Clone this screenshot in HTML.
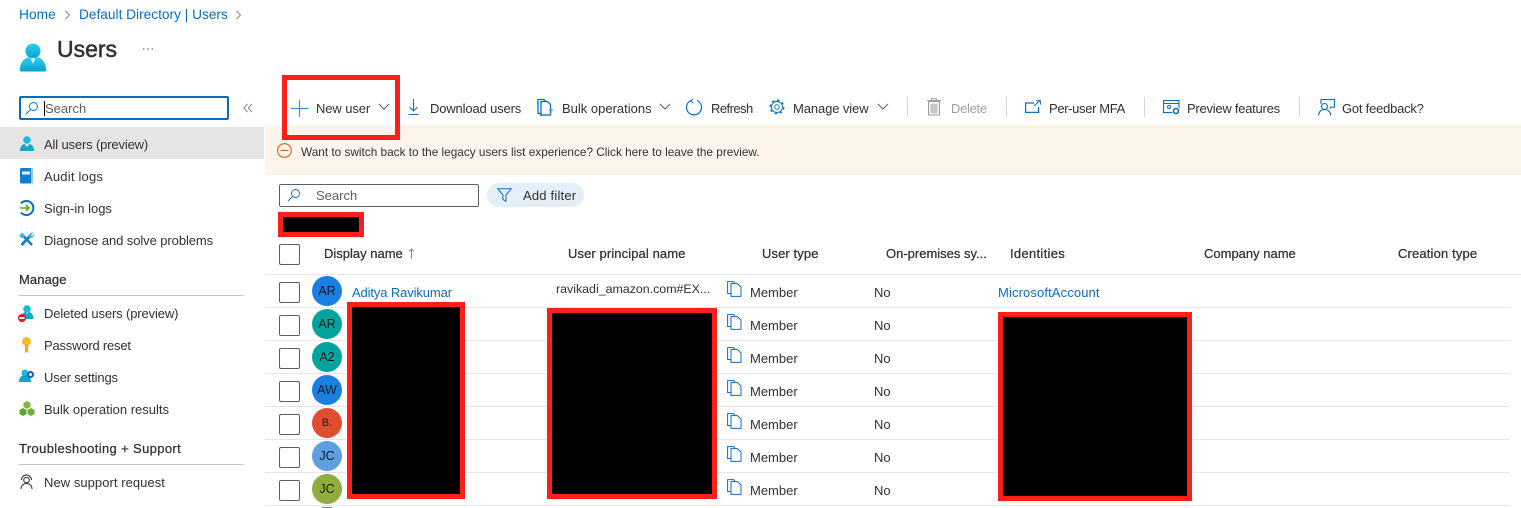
<!DOCTYPE html>
<html><head><meta charset="utf-8"><style>
html,body{margin:0;padding:0;background:#fff}
#p{position:relative;width:1521px;height:508px;overflow:hidden;background:#fff;font-family:"Liberation Sans",sans-serif;font-size:13px;color:#323130}
#p div,#p svg,#p span.t{position:absolute}
.t{white-space:nowrap;line-height:16px}
.b{color:#0f6cbd}
.h{font-weight:400;-webkit-text-stroke:.25px #323130}
.cb{width:19px;height:19px;border:1px solid #605e5c;border-radius:2px;left:279px;background:#fff}
.av{width:30px;height:30px;border-radius:50%;left:312px;text-align:center;line-height:30px;font-size:12.5px;color:#1b1a19}
.ln{height:1px;background:#e6e6e6;left:265px}
.rd{box-sizing:border-box;background:#000;border:5px solid #fe1f1b}
.sep{width:1px;height:20px;background:#d6d6d6;top:97px}
</style></head><body><div id="p">

<span class="t b" style="left:19px;top:7px;font-size:13.8px">Home</span>
<svg style="left:64px;top:10px" width="8" height="10" viewBox="0 0 8 10"><path d="M1.5 1l4 4-4 4" fill="none" stroke="#8a8886"/></svg>
<span class="t b" style="left:79px;top:7px;font-size:13.7px">Default Directory | Users</span>
<svg style="left:235px;top:10px" width="8" height="10" viewBox="0 0 8 10"><path d="M1.5 1l4 4-4 4" fill="none" stroke="#8a8886"/></svg>

<svg style="left:19px;top:42px" width="28" height="30" viewBox="0 0 28 30"><defs><linearGradient id="g" x1="0" y1="0" x2="0" y2="1"><stop offset="0" stop-color="#2bd0f2"/><stop offset="1" stop-color="#0aa0cf"/></linearGradient></defs><circle cx="14" cy="9" r="7.500" fill="url(#g)"/><path d="M1 28c0-7 3-11 8-12.500h10c5 1.500 8 5.500 8 12.500 0 1-.5 1.500-1.500 1.500h-23C1.500 29.500 1 29 1 28z" fill="url(#g)"/><path d="M11.500 16h5L14 22z" fill="#d7f3fb"/></svg>
<span class="t" style="left:57px;top:35px;font-size:23px;line-height:28px;font-weight:400;-webkit-text-stroke:.5px #323130">Users</span>
<span class="t" style="left:142px;top:41px;font-size:11px;letter-spacing:.5px">···</span>

<div style="left:19px;top:96px;width:206px;height:20px;border:2px solid #0f6cbd;border-radius:2px;background:#fff"></div>
<svg style="left:25px;top:101px" width="14" height="14" viewBox="0 0 14 14"><circle cx="8.500" cy="5.500" r="4" fill="none" stroke="#0f6cbd" stroke-width=".9"/><path d="M5.500 8.500L1 13" stroke="#0f6cbd" fill="none"/></svg>
<div style="left:44px;top:101px;width:1px;height:15px;background:#000"></div>
<span class="t" style="left:45px;top:101px;color:#605e5c">Search</span>
<svg style="left:243px;top:103px" width="10" height="10" viewBox="0 0 10 10"><path d="M4.500 1L.8 5l3.700 4M9 1L5.300 5 9 9" fill="none" stroke="#8a8886"/></svg>

<div style="left:0;top:127px;width:264px;height:32px;background:#e7e5e3"></div>
<svg style="left:20px;top:136px" width="14" height="16" viewBox="0 0 14 16"><circle cx="7" cy="4" r="3.800" fill="#1cb8dd"/><path d="M0 15c0-4 2-6.500 4.500-7L7 11l2.500-3C12 8.500 14 11 14 15z" fill="#0ea5cf"/></svg>
<span class="t" style="left:44px;top:137px;letter-spacing:-.15px">All users (preview)</span>
<svg style="left:20px;top:168px" width="13" height="16" viewBox="0 0 13 16"><rect width="13" height="15.500" rx="1.500" fill="#0f7fd0"/><rect x="11" width="2" height="15.500" fill="#8ecae9"/><rect x="2" y="3.500" width="8" height="3" fill="#dff1fb"/></svg>
<span class="t" style="left:44px;top:169px;letter-spacing:.2px">Audit logs</span>
<svg style="left:19px;top:200px" width="16" height="16" viewBox="0 0 16 16"><path d="M2 3.500A7 7 0 1 1 2 12.500" fill="none" stroke="#0f6cbd" stroke-width="2"/><path d="M1 8h9M7 5l3 3-3 3" fill="none" stroke="#5db300" stroke-width="1.600"/></svg>
<span class="t" style="left:44px;top:201px">Sign-in logs</span>
<svg style="left:19px;top:232px" width="15" height="15" viewBox="0 0 15 15"><path d="M2.500 13L11.500 3.500" stroke="#0f7fd0" stroke-width="2.800"/><path d="M3.500 3L13 13" stroke="#0f7fd0" stroke-width="2.500"/><path d="M0 3.500L3 .5l3 3-3 3z" fill="#35b8e6"/><path d="M10 4c0-2 2-4 4.500-3.500L12 3l1 1 2-2c.3 2.500-2 4.500-4 4z" fill="#35b8e6"/></svg>
<span class="t" style="left:44px;top:233px;letter-spacing:-.08px">Diagnose and solve problems</span>

<span class="t h" style="left:19px;top:272px;letter-spacing:.1px">Manage</span>
<div style="left:19px;top:295px;width:225px;height:1px;background:#c4c4c4"></div>
<svg style="left:18px;top:305px" width="16" height="17" viewBox="0 0 16 17"><circle cx="9" cy="4" r="3.800" fill="#1cb8dd"/><path d="M3 14c0-4 2-6.500 4.500-7L9 9l2-2c2.500.5 4.500 3 4.500 7z" fill="#0ea5cf"/><circle cx="4" cy="13" r="4" fill="#e81123"/><rect x="1.500" y="12" width="5" height="2" fill="#fff"/></svg>
<span class="t" style="left:44px;top:306px;letter-spacing:-.13px">Deleted users (preview)</span>
<svg style="left:21px;top:337px" width="11" height="16" viewBox="0 0 11 16"><circle cx="5.500" cy="4.500" r="4.500" fill="#fcb92c"/><rect x="4" y="7" width="3.200" height="8.500" fill="#f7a81b"/></svg>
<span class="t" style="left:44px;top:338px;letter-spacing:-.2px">Password reset</span>
<svg style="left:19px;top:369px" width="16" height="14" viewBox="0 0 16 14"><circle cx="6" cy="4" r="3.500" fill="#1cb8dd"/><path d="M0 13c0-4 2-6 4-6.500h4c2 .5 4 2.500 4 6.500z" fill="#0ea5cf"/><circle cx="11.500" cy="5.500" r="2.500" fill="#fff" stroke="#0f5fc0" stroke-width="2"/></svg>
<span class="t" style="left:44px;top:370px;letter-spacing:-.15px">User settings</span>
<svg style="left:19px;top:401px" width="16" height="15" viewBox="0 0 16 15"><path d="M8 0l3.500 2v4L8 8 4.500 6V2z" fill="#7fba3d"/><path d="M4 7l3.500 2v4L4 15 .5 13V9z" fill="#5fa52d"/><path d="M12 7l3.500 2v4L12 15l-3.500-2V9z" fill="#6fb135"/></svg>
<span class="t" style="left:44px;top:402px">Bulk operation results</span>

<span class="t h" style="left:19px;top:441px;letter-spacing:.36px">Troubleshooting + Support</span>
<div style="left:19px;top:464px;width:225px;height:1px;background:#c4c4c4"></div>
<svg style="left:19px;top:474px" width="15" height="16" viewBox="0 0 15 16"><circle cx="7.500" cy="6" r="2.800" fill="none" stroke="#323130"/><path d="M2.500 6a5 5 0 0 1 10 0M2 15c0-3 2-5.500 5.500-5.500S13 12 13 15" fill="none" stroke="#323130"/></svg>
<span class="t" style="left:44px;top:475px;letter-spacing:.05px">New support request</span>

<!-- Toolbar -->
<svg style="left:291px;top:100px" width="17" height="17" viewBox="0 0 17 17"><path d="M8.500 0v17M0 8.500h17" stroke="#3d8fd8" stroke-width="1.200"/></svg>
<span class="t" style="left:316px;top:101px;letter-spacing:-.1px">New user</span>
<svg style="left:378px;top:103px" width="12" height="8" viewBox="0 0 12 8"><path d="M1 1l5 5 5-5" fill="none" stroke="#605e5c"/></svg>
<svg style="left:408px;top:99px" width="11" height="17" viewBox="0 0 11 17"><path d="M5.500 0v12M1.500 8l4 4 4-4" fill="none" stroke="#0f6cbd"/><path d="M.5 15.500h10" stroke="#0f6cbd"/></svg>
<span class="t" style="left:430px;top:101px;letter-spacing:-.15px">Download users</span>
<svg style="left:537px;top:98px" width="17" height="18" viewBox="0 0 17 18"><path d="M1 1.500h6l3 3V17H3.500V15.500H1z" fill="none" stroke="#0f6cbd" stroke-width="1.300"/><path d="M4 3.500h6.500l3 3V17H4z" fill="#fff" stroke="#0f6cbd" stroke-width="1.300"/><path d="M14 10v5M12 12h4" stroke="#3d8fd8"/></svg>
<span class="t" style="left:562px;top:101px">Bulk operations</span>
<svg style="left:659px;top:103px" width="12" height="8" viewBox="0 0 12 8"><path d="M1 1l5 5 5-5" fill="none" stroke="#605e5c"/></svg>
<svg style="left:686px;top:98px" width="17" height="18" viewBox="0 0 17 18"><path d="M5 2.500A7.500 7.500 0 1 0 11 2.500" fill="none" stroke="#0f6cbd" stroke-width="1.200"/><path d="M7 1L4.500 3 7.500 5" fill="none" stroke="#0f6cbd" stroke-width="1"/></svg>
<span class="t" style="left:711px;top:101px;letter-spacing:-.55px">Refresh</span>
<svg style="left:769px;top:99px" width="16" height="16" viewBox="0 0 16 16"><circle cx="8" cy="8" r="2.300" fill="none" stroke="#0f6cbd" stroke-width=".9"/><circle cx="8" cy="8" r="5.500" fill="none" stroke="#0f6cbd" stroke-width=".9"/><circle cx="8" cy="8" r="6.800" fill="none" stroke="#0f6cbd" stroke-width="1.300" stroke-dasharray="2.600 2.700"/></svg>
<span class="t" style="left:793px;top:101px;letter-spacing:-.1px">Manage view</span>
<svg style="left:877px;top:103px" width="12" height="8" viewBox="0 0 12 8"><path d="M1 1l5 5 5-5" fill="none" stroke="#605e5c"/></svg>
<div class="sep" style="left:907px"></div>
<svg style="left:927px;top:98px" width="14" height="18" viewBox="0 0 14 18"><path d="M0 2.500h14M4.500 2.500V.7h5v1.800" fill="none" stroke="#a19f9d"/><rect x="1.500" y="3.500" width="11" height="13.500" fill="#f3f2f1" stroke="#a19f9d"/><rect x="3.500" y="6" width="7" height="9" fill="#c8c6c4"/></svg>
<span class="t" style="left:951px;top:101px;color:#a19f9d;letter-spacing:-.3px">Delete</span>
<div class="sep" style="left:1006px"></div>
<svg style="left:1025px;top:100px" width="16" height="13" viewBox="0 0 16 13"><path d="M9 3H.6v9.400h13V7" fill="none" stroke="#0f6cbd" stroke-width="1.200"/><path d="M9 6l6-5.500M11 .6h4.400v4" fill="none" stroke="#0f6cbd"/></svg>
<span class="t" style="left:1049px;top:101px;letter-spacing:-.35px">Per-user MFA</span>
<div class="sep" style="left:1144px"></div>
<svg style="left:1163px;top:100px" width="17" height="15" viewBox="0 0 17 15"><path d="M16 8V.6H.6v12H9M.6 3.500H16" fill="none" stroke="#0f6cbd" stroke-width="1.100"/><circle cx="13" cy="11" r="2.500" fill="none" stroke="#0f6cbd" stroke-width="1.600"/><circle cx="6" cy="7" r="1.500" fill="none" stroke="#0f6cbd"/></svg>
<span class="t" style="left:1187px;top:101px;letter-spacing:-.25px">Preview features</span>
<div class="sep" style="left:1299px"></div>
<svg style="left:1318px;top:99px" width="17" height="17" viewBox="0 0 17 17"><circle cx="6.500" cy="7.500" r="3" fill="none" stroke="#0f6cbd" stroke-width="1.100"/><path d="M.6 16.500c0-3.500 2.500-6 6-6s6 2.500 6 6M3 5V.6h13.500v7.500H13l-1.500 1.500" fill="none" stroke="#0f6cbd" stroke-width="1.100"/></svg>
<span class="t" style="left:1342px;top:101px;letter-spacing:-.22px">Got feedback?</span>

<!-- Banner -->
<div style="left:265px;top:125px;width:1256px;height:50px;background:#fdf4ec"></div>
<svg style="left:277px;top:143px" width="15" height="15" viewBox="0 0 15 15"><circle cx="7.500" cy="7.500" r="6.800" fill="none" stroke="#d9622b" stroke-width="1.100"/><path d="M3.500 7.500h8" stroke="#d9622b" stroke-width="1.100"/></svg>
<span class="t" style="left:301px;top:144px;font-size:11.800px">Want to switch back to the legacy users list experience? Click here to leave the preview.</span>

<!-- Filter row -->
<div style="left:279px;top:184px;width:198px;height:21px;border:1px solid #605e5c;border-radius:2px"></div>
<svg style="left:287px;top:188px" width="14" height="14" viewBox="0 0 14 14"><circle cx="8.500" cy="5.500" r="4" fill="none" stroke="#0f6cbd" stroke-width=".9"/><path d="M5.500 8.500L1 13" stroke="#0f6cbd" fill="none"/></svg>
<span class="t" style="left:316px;top:188px;color:#605e5c">Search</span>
<div style="left:487px;top:183px;width:97px;height:24px;border-radius:12px;background:#e3eff9"></div>
<svg style="left:497px;top:188px" width="15" height="14" viewBox="0 0 15 14"><path d="M.7.700h13.600L9 7v6.300L6 11.500V7z" fill="none" stroke="#0f6cbd"/></svg>
<span class="t" style="left:523px;top:188px;letter-spacing:.2px">Add filter</span>

<!-- Table header -->
<div class="cb" style="top:244px"></div>
<span class="t h" style="left:324px;top:246px">Display name</span>
<svg style="left:408px;top:248px" width="7" height="11" viewBox="0 0 7 11"><path d="M3.500 1v10M1 3.500L3.500 1 6 3.500" fill="none" stroke="#8a8886"/></svg>
<span class="t h" style="left:568px;top:246px;letter-spacing:.1px">User principal name</span>
<span class="t h" style="left:762px;top:246px;letter-spacing:.1px">User type</span>
<span class="t h" style="left:886px;top:246px">On-premises sy...</span>
<span class="t h" style="left:1010px;top:246px;letter-spacing:.3px">Identities</span>
<span class="t h" style="left:1204px;top:246px">Company name</span>
<span class="t h" style="left:1398px;top:246px;letter-spacing:.15px">Creation type</span>
<div class="ln" style="top:274px;width:1256px"></div>

<!-- Rows -->
<div class="ln" style="top:307px;width:1245px"></div>
<div class="ln" style="top:340px;width:1245px"></div>
<div class="ln" style="top:373px;width:1245px"></div>
<div class="ln" style="top:406px;width:1245px"></div>
<div class="ln" style="top:439px;width:1245px"></div>
<div class="ln" style="top:472px;width:1245px"></div>
<div class="ln" style="top:505px;width:1245px"></div>

<div class="cb" style="top:282px"></div>
<div class="cb" style="top:315px"></div>
<div class="cb" style="top:348px"></div>
<div class="cb" style="top:381px"></div>
<div class="cb" style="top:414px"></div>
<div class="cb" style="top:447px"></div>
<div class="cb" style="top:480px"></div>

<div class="av" style="top:276px;background:#1a7fe3">AR</div>
<div class="av" style="top:309px;background:#02a39e">AR</div>
<div class="av" style="top:342px;background:#02a39e">A2</div>
<div class="av" style="top:375px;background:#1a7fe3">AW</div>
<div class="av" style="top:408px;background:#e04d2f;font-size:11px">B.</div>
<div class="av" style="top:441px;background:#5d9fe0">JC</div>
<div class="av" style="top:474px;background:#8fac3f">JC</div>
<div style="left:322px;top:507px;width:10px;height:1px;background:#6f8f8c"></div>

<span class="t b" style="left:352px;top:285px;letter-spacing:-.12px">Aditya Ravikumar</span>
<span class="t" style="left:556px;top:281px;font-size:12.400px">ravikadi_amazon.com#EX...</span>
<span class="t b" style="left:998px;top:285px;letter-spacing:.12px">MicrosoftAccount</span>

<svg style="left:727px;top:281px" width="15" height="16" viewBox="0 0 15 16"><path d="M4 12.500H.6V.6h6l1.400 1.500" fill="none" stroke="#0f6cbd"/><path d="M4 2.600h6.500L14 6v9.400H4z" fill="#fff" stroke="#0f6cbd"/></svg>
<svg style="left:727px;top:314px" width="15" height="16" viewBox="0 0 15 16"><path d="M4 12.500H.6V.6h6l1.400 1.500" fill="none" stroke="#0f6cbd"/><path d="M4 2.600h6.500L14 6v9.400H4z" fill="#fff" stroke="#0f6cbd"/></svg>
<svg style="left:727px;top:347px" width="15" height="16" viewBox="0 0 15 16"><path d="M4 12.500H.6V.6h6l1.400 1.500" fill="none" stroke="#0f6cbd"/><path d="M4 2.600h6.500L14 6v9.400H4z" fill="#fff" stroke="#0f6cbd"/></svg>
<svg style="left:727px;top:380px" width="15" height="16" viewBox="0 0 15 16"><path d="M4 12.500H.6V.6h6l1.400 1.500" fill="none" stroke="#0f6cbd"/><path d="M4 2.600h6.500L14 6v9.400H4z" fill="#fff" stroke="#0f6cbd"/></svg>
<svg style="left:727px;top:413px" width="15" height="16" viewBox="0 0 15 16"><path d="M4 12.500H.6V.6h6l1.400 1.500" fill="none" stroke="#0f6cbd"/><path d="M4 2.600h6.500L14 6v9.400H4z" fill="#fff" stroke="#0f6cbd"/></svg>
<svg style="left:727px;top:446px" width="15" height="16" viewBox="0 0 15 16"><path d="M4 12.500H.6V.6h6l1.400 1.500" fill="none" stroke="#0f6cbd"/><path d="M4 2.600h6.500L14 6v9.400H4z" fill="#fff" stroke="#0f6cbd"/></svg>
<svg style="left:727px;top:479px" width="15" height="16" viewBox="0 0 15 16"><path d="M4 12.500H.6V.6h6l1.400 1.500" fill="none" stroke="#0f6cbd"/><path d="M4 2.600h6.500L14 6v9.400H4z" fill="#fff" stroke="#0f6cbd"/></svg>

<span class="t" style="left:750px;top:285px">Member</span><span class="t" style="left:874px;top:285px">No</span>
<span class="t" style="left:750px;top:318px">Member</span><span class="t" style="left:874px;top:318px">No</span>
<span class="t" style="left:750px;top:351px">Member</span><span class="t" style="left:874px;top:351px">No</span>
<span class="t" style="left:750px;top:384px">Member</span><span class="t" style="left:874px;top:384px">No</span>
<span class="t" style="left:750px;top:417px">Member</span><span class="t" style="left:874px;top:417px">No</span>
<span class="t" style="left:750px;top:450px">Member</span><span class="t" style="left:874px;top:450px">No</span>
<span class="t" style="left:750px;top:483px">Member</span><span class="t" style="left:874px;top:483px">No</span>

<!-- Redactions -->
<div style="left:282px;top:75px;width:118px;height:65px;box-sizing:border-box;border:5px solid #fe1f1b"></div>
<div class="rd" style="left:278px;top:212px;width:86px;height:25px"></div>
<div class="rd" style="left:347px;top:302px;width:118px;height:197px"></div>
<div class="rd" style="left:547px;top:308px;width:170px;height:191px"></div>
<div class="rd" style="left:998px;top:312px;width:194px;height:189px"></div>

</div></body></html>
